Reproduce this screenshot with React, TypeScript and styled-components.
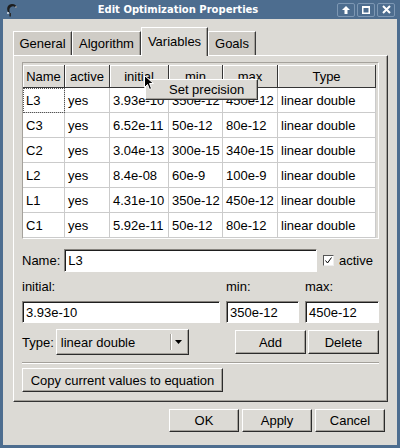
import styled, { createGlobalStyle } from 'styled-components';

const GlobalStyle = createGlobalStyle`
  html, body { margin: 0; padding: 0; }
  body {
    font-family: "Liberation Sans", Arial, sans-serif;
    font-size: 13px;
    color: #000;
  }
`;

const Window = styled.div`
  width: 400px;
  height: 448px;
  box-sizing: border-box;
  background: #4d6d8f;
  padding: 0 3px 3px 3px;
  display: flex;
  flex-direction: column;
`;

const TitleBar = styled.div`
  height: 19px;
  display: flex;
  align-items: center;
  padding: 0 2px;
`;

const Title = styled.div`
  flex: 1;
  text-align: center;
  color: #fff;
  font-family: "DejaVu Sans", sans-serif;
  font-weight: bold;
  font-size: 10px;
`;

const TitleButtons = styled.div`
  display: flex;
  gap: 2px;
`;

const TitleButton = styled.div`
  width: 18px;
  height: 14px;
  box-sizing: border-box;
  border: 1px solid #7d97b3;
  border-radius: 2px;
  display: flex;
  align-items: center;
  justify-content: center;
`;

const Body = styled.div`
  flex: 1;
  background: #dcdad5;
  padding: 8px 9px 0 10px;
  display: flex;
  flex-direction: column;
`;

const TabBar = styled.div`
  height: 28px;
  display: flex;
  align-items: flex-end;
`;

const Tab = styled.div<{ $active?: boolean; $w: number }>`
  position: relative;
  z-index: ${(p) => (p.$active ? 1 : 0)};
  box-sizing: border-box;
  width: ${(p) => p.$w}px;
  height: ${(p) => (p.$active ? '29px' : '24px')};
  margin-bottom: ${(p) => (p.$active ? '-1px' : '0')};
  padding-bottom: ${(p) => (p.$active ? '2px' : '0')};
  display: flex;
  align-items: center;
  justify-content: center;
  background: ${(p) => (p.$active ? '#dcdad5' : '#cfccc6')};
  border-top: 1px solid #fff;
  border-left: 1px solid #fff;
  border-right: 1px solid #3a3a3a;
  box-shadow: inset -1px 0 0 #a3a09a;
`;

const Panel = styled.div`
  height: 347px;
  box-sizing: border-box;
  border-top: 1px solid #fff;
  border-left: 1px solid #fff;
  border-right: 1px solid #333;
  border-bottom: 1px solid #333;
  box-shadow: inset -1px -1px 0 #a3a09a;
  padding: 6px 8px 9px 8px;
  display: flex;
  flex-direction: column;
`;

const TableFrame = styled.div`
  position: relative;
  height: 177px;
  box-sizing: border-box;
  border-top: 1px solid #a5a29c;
  border-left: 1px solid #a5a29c;
  border-right: 1px solid #fff;
  border-bottom: 1px solid #fff;
  padding-top: 2px;
`;

const Grid = styled.div`
  display: grid;
  grid-template-columns: 42px 45px 59px 54px 55px 98px;
  width: 353px;
  background: #fff;
`;

const HeadCell = styled.div`
  height: 23px;
  box-sizing: border-box;
  display: flex;
  align-items: center;
  justify-content: center;
  background: #dcdad5;
  border-right: 1px solid #353535;
  border-bottom: 1px solid #353535;
  box-shadow: inset 1px 1px 0 #fff;
  white-space: nowrap;
  overflow: hidden;
`;

const Cell = styled.div<{ $focus?: boolean }>`
  height: 25px;
  box-sizing: border-box;
  padding-left: 3px;
  display: flex;
  align-items: center;
  border-right: 1px solid #cbcbcb;
  border-bottom: 1px solid #cbcbcb;
  white-space: nowrap;
  overflow: hidden;
  ${(p) => (p.$focus ? 'outline: 1px dotted #555; outline-offset: -1px;' : '')}
`;

const PopupMenu = styled.div`
  position: absolute;
  left: 122px;
  top: 16px;
  width: 113px;
  height: 21px;
  box-sizing: border-box;
  background: #dcdad5;
  border-top: 1px solid #fff;
  border-left: 1px solid #fff;
  border-right: 1px solid #333;
  border-bottom: 1px solid #333;
  box-shadow: inset -1px -1px 0 #a3a09a;
  padding-left: 23px;
  display: flex;
  align-items: center;
  z-index: 2;
`;

const Cursor = styled.svg`
  position: absolute;
  left: 121px;
  top: 12px;
  z-index: 3;
`;

const Row = styled.div<{ $mt: number; $h: number }>`
  margin-top: ${(p) => p.$mt}px;
  height: ${(p) => p.$h}px;
  display: flex;
  align-items: center;
`;

const Label = styled.span`
  white-space: nowrap;
`;

const Input = styled.div<{ $w?: number; $h?: number }>`
  box-sizing: border-box;
  ${(p) => (p.$w ? `width: ${p.$w}px;` : 'flex: 1;')}
  height: ${(p) => p.$h ?? 22}px;
  background: #fff;
  border-top: 1px solid #85827d;
  border-left: 1px solid #85827d;
  border-right: 1px solid #fff;
  border-bottom: 1px solid #fff;
  box-shadow: inset 1px 1px 0 #1e1e1e;
  padding-left: 3px;
  display: flex;
  align-items: center;
`;

const CheckBox = styled.div`
  width: 11px;
  height: 11px;
  box-sizing: border-box;
  background: #fff;
  border-top: 1px solid #555;
  border-left: 1px solid #555;
  border-right: 1px solid #eee;
  border-bottom: 1px solid #eee;
  display: flex;
  align-items: center;
  justify-content: center;
  margin: 0 5px 0 6px;
`;

const FieldGrid = styled.div`
  margin-top: 7px;
  display: grid;
  grid-template-columns: 198px 73px 74px;
  grid-template-rows: 15px 22px;
  column-gap: 6px;
  row-gap: 7px;
  align-items: center;
`;

const Combo = styled.div`
  margin-left: 2px;
  width: 133px;
  height: 26px;
  box-sizing: border-box;
  border-top: 1px solid #fff;
  border-left: 1px solid #fff;
  border-right: 1px solid #2b2b2b;
  border-bottom: 1px solid #2b2b2b;
  box-shadow: inset -1px -1px 0 #a3a09a;
  display: flex;
  align-items: center;
`;

const ComboText = styled.span`
  flex: 1;
  padding-left: 4px;
`;

const ComboArrow = styled.div`
  width: 16px;
  height: 16px;
  border-left: 1px solid #a3a09a;
  box-shadow: inset 1px 0 0 #fff;
  display: flex;
  align-items: center;
  justify-content: center;
  margin-right: 1px;
`;

const Button = styled.div<{ $w: number; $h?: number }>`
  width: ${(p) => p.$w}px;
  height: ${(p) => p.$h ?? 24}px;
  box-sizing: border-box;
  background: #dcdad5;
  border-top: 1px solid #fff;
  border-left: 1px solid #fff;
  border-right: 1px solid #2b2b2b;
  border-bottom: 1px solid #2b2b2b;
  box-shadow: inset -1px -1px 0 #a3a09a;
  display: flex;
  align-items: center;
  justify-content: center;
  white-space: nowrap;
`;

const Separator = styled.div`
  margin-top: 7px;
  height: 1px;
  border-top: 1px solid #a3a09a;
  border-bottom: 1px solid #fff;
`;

const Footer = styled.div`
  margin-top: 7px;
  margin-right: 3px;
  display: flex;
  justify-content: flex-end;
  gap: 3px;
`;

const tabs = [
  { name: 'General', w: 59 },
  { name: 'Algorithm', w: 69 },
  { name: 'Variables', w: 67 },
  { name: 'Goals', w: 48 },
];

const columns = ['Name', 'active', 'initial', 'min', 'max', 'Type'];

const rows = [
  ['L3', 'yes', '3.93e-10', '350e-12', '450e-12', 'linear double'],
  ['C3', 'yes', '6.52e-11', '50e-12', '80e-12', 'linear double'],
  ['C2', 'yes', '3.04e-13', '300e-15', '340e-15', 'linear double'],
  ['L2', 'yes', '8.4e-08', '60e-9', '100e-9', 'linear double'],
  ['L1', 'yes', '4.31e-10', '350e-12', '450e-12', 'linear double'],
  ['C1', 'yes', '5.92e-11', '50e-12', '80e-12', 'linear double'],
];

function Logo() {
  return (
    <svg width="14" height="15" viewBox="0 0 14 15">
      <path d="M3 10 C1 6 3 2 7 2 C10 2 12 4 12 6 L10 5 C9 4 7 4 6 5 C4 6 4 9 5 11 Z" fill="#1d1d1d" />
      <path d="M5 11 C4 12 4 14 5 15 L6 14 C6 13 6 12 6 11 Z" fill="#2a2a2a" />
      <circle cx="3" cy="11" r="1" fill="#d8dee6" />
      <circle cx="11" cy="5" r="0.8" fill="#d8dee6" />
    </svg>
  );
}

function App() {
  return (
    <>
      <GlobalStyle />
      <Window>
        <TitleBar>
          <Logo />
          <Title>Edit Optimization Properties</Title>
          <TitleButtons>
            <TitleButton>
              <svg width="8" height="8" viewBox="0 0 8 8">
                <path d="M4 0 L8 4 L5.5 4 L5.5 8 L2.5 8 L2.5 4 L0 4 Z" fill="#fff" />
              </svg>
            </TitleButton>
            <TitleButton>
              <svg width="8" height="8" viewBox="0 0 8 8">
                <rect x="0.75" y="0.75" width="6.5" height="6.5" fill="none" stroke="#fff" strokeWidth="1.5" />
                <rect x="0" y="0" width="8" height="2" fill="#fff" />
              </svg>
            </TitleButton>
            <TitleButton>
              <svg width="9" height="9" viewBox="0 0 9 9">
                <path d="M1 1 L8 8 M8 1 L1 8" stroke="#fff" strokeWidth="2" />
              </svg>
            </TitleButton>
          </TitleButtons>
        </TitleBar>
        <Body>
          <TabBar>
            {tabs.map((t) => (
              <Tab key={t.name} $w={t.w} $active={t.name === 'Variables'}>
                {t.name}
              </Tab>
            ))}
          </TabBar>
          <Panel>
            <TableFrame>
              <Grid>
                {columns.map((c) => (
                  <HeadCell key={c}>{c}</HeadCell>
                ))}
                {rows.map((r, i) =>
                  r.map((v, j) => (
                    <Cell key={`${i}-${j}`} $focus={i === 0 && j === 0}>
                      {v}
                    </Cell>
                  )),
                )}
              </Grid>
              <PopupMenu>Set precision</PopupMenu>
              <Cursor width="10" height="16" viewBox="0 0 10 16">
                <path d="M0.5 0.5 L0.5 12.5 L3.5 9.5 L5.5 14.5 L7.5 13.5 L5.5 8.5 L9.5 8.5 Z" fill="#000" stroke="#fff" strokeWidth="1" />
              </Cursor>
            </TableFrame>

            <Row $mt={10} $h={23}>
              <Label>Name:</Label>
              <Input $h={23} style={{ marginLeft: 4 }}>L3</Input>
              <CheckBox>
                <svg width="7" height="7" viewBox="0 0 7 7">
                  <path d="M0.5 3.5 L2.5 6 L6.5 0.5" fill="none" stroke="#000" strokeWidth="1" />
                </svg>
              </CheckBox>
              <Label style={{ marginRight: 6 }}>active</Label>
            </Row>

            <FieldGrid>
              <Label>initial:</Label>
              <Label>min:</Label>
              <Label>max:</Label>
              <Input $w={198}>3.93e-10</Input>
              <Input $w={73}>350e-12</Input>
              <Input $w={74}>450e-12</Input>
            </FieldGrid>

            <Row $mt={6} $h={26}>
              <Label>Type:</Label>
              <Combo>
                <ComboText>linear double</ComboText>
                <ComboArrow>
                  <svg width="7" height="4" viewBox="0 0 7 4">
                    <path d="M0 0 L7 0 L3.5 4 Z" fill="#000" />
                  </svg>
                </ComboArrow>
              </Combo>
              <Button $w={71} style={{ marginLeft: 'auto' }}>Add</Button>
              <Button $w={71} style={{ marginLeft: 2 }}>Delete</Button>
            </Row>

            <Separator />

            <Row $mt={4} $h={24}>
              <Button $w={201}>Copy current values to equation</Button>
            </Row>
          </Panel>
          <Footer>
            <Button $w={70} $h={23}>OK</Button>
            <Button $w={70} $h={23}>Apply</Button>
            <Button $w={70} $h={23}>Cancel</Button>
          </Footer>
        </Body>
      </Window>
    </>
  );
}

export default App;
